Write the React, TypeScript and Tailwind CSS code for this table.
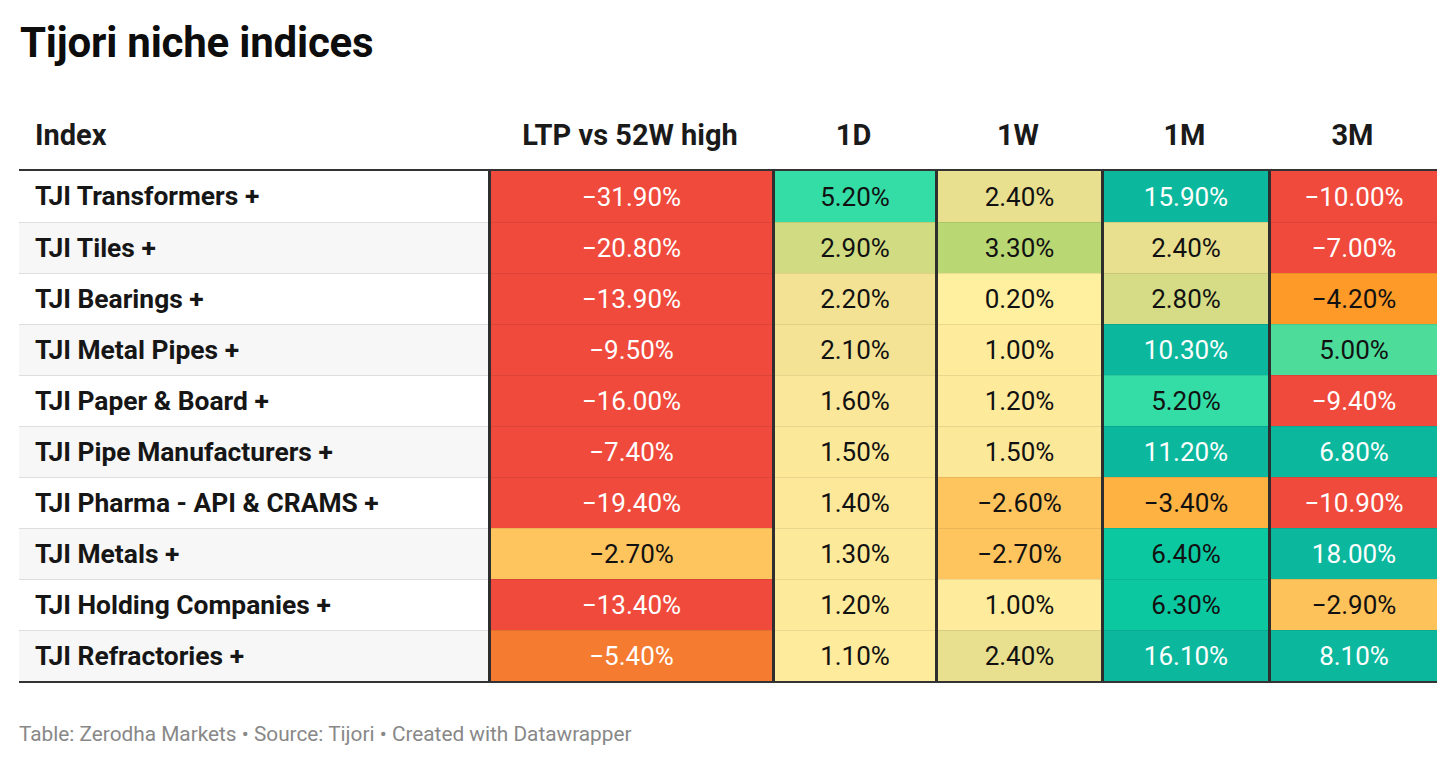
import React from "react";

type Cell = { v: string; c: string };

const R = "bg-[#ef4a3c] text-white";
const TEAL = "bg-[#0bb89e] text-white";
const TEAL2 = "bg-[#0cc8a1] text-[#111]";
const MINT = "bg-[#34dca6] text-[#111]";

const rows: { name: string; cells: Cell[] }[] = [
  {
    name: "TJI Transformers +",
    cells: [
      { v: "−31.90%", c: R },
      { v: "5.20%", c: MINT },
      { v: "2.40%", c: "bg-[#e8df8f] text-[#111]" },
      { v: "15.90%", c: TEAL },
      { v: "−10.00%", c: R },
    ],
  },
  {
    name: "TJI Tiles +",
    cells: [
      { v: "−20.80%", c: R },
      { v: "2.90%", c: "bg-[#d1dc82] text-[#111]" },
      { v: "3.30%", c: "bg-[#b9d772] text-[#111]" },
      { v: "2.40%", c: "bg-[#e8df8f] text-[#111]" },
      { v: "−7.00%", c: R },
    ],
  },
  {
    name: "TJI Bearings +",
    cells: [
      { v: "−13.90%", c: R },
      { v: "2.20%", c: "bg-[#f3e293] text-[#111]" },
      { v: "0.20%", c: "bg-[#fef09f] text-[#111]" },
      { v: "2.80%", c: "bg-[#d5dc85] text-[#111]" },
      { v: "−4.20%", c: "bg-[#fd9a28] text-[#111]" },
    ],
  },
  {
    name: "TJI Metal Pipes +",
    cells: [
      { v: "−9.50%", c: R },
      { v: "2.10%", c: "bg-[#f4e394] text-[#111]" },
      { v: "1.00%", c: "bg-[#feec9c] text-[#111]" },
      { v: "10.30%", c: TEAL },
      { v: "5.00%", c: "bg-[#4ddc9a] text-[#111]" },
    ],
  },
  {
    name: "TJI Paper & Board +",
    cells: [
      { v: "−16.00%", c: R },
      { v: "1.60%", c: "bg-[#fbe799] text-[#111]" },
      { v: "1.20%", c: "bg-[#feea9b] text-[#111]" },
      { v: "5.20%", c: MINT },
      { v: "−9.40%", c: R },
    ],
  },
  {
    name: "TJI Pipe Manufacturers +",
    cells: [
      { v: "−7.40%", c: R },
      { v: "1.50%", c: "bg-[#fce899] text-[#111]" },
      { v: "1.50%", c: "bg-[#fce899] text-[#111]" },
      { v: "11.20%", c: TEAL },
      { v: "6.80%", c: TEAL },
    ],
  },
  {
    name: "TJI Pharma - API & CRAMS +",
    cells: [
      { v: "−19.40%", c: R },
      { v: "1.40%", c: "bg-[#fde89a] text-[#111]" },
      { v: "−2.60%", c: "bg-[#fec55f] text-[#111]" },
      { v: "−3.40%", c: "bg-[#fdb242] text-[#111]" },
      { v: "−10.90%", c: R },
    ],
  },
  {
    name: "TJI Metals +",
    cells: [
      { v: "−2.70%", c: "bg-[#fec55f] text-[#111]" },
      { v: "1.30%", c: "bg-[#fde99a] text-[#111]" },
      { v: "−2.70%", c: "bg-[#fec55f] text-[#111]" },
      { v: "6.40%", c: TEAL2 },
      { v: "18.00%", c: TEAL },
    ],
  },
  {
    name: "TJI Holding Companies +",
    cells: [
      { v: "−13.40%", c: R },
      { v: "1.20%", c: "bg-[#feea9b] text-[#111]" },
      { v: "1.00%", c: "bg-[#feec9c] text-[#111]" },
      { v: "6.30%", c: TEAL2 },
      { v: "−2.90%", c: "bg-[#fec25a] text-[#111]" },
    ],
  },
  {
    name: "TJI Refractories +",
    cells: [
      { v: "−5.40%", c: "bg-[#f47b2f] text-white" },
      { v: "1.10%", c: "bg-[#feeb9c] text-[#111]" },
      { v: "2.40%", c: "bg-[#e8df8f] text-[#111]" },
      { v: "16.10%", c: TEAL },
      { v: "8.10%", c: TEAL },
    ],
  },
];

const widths = ["w-[284px]", "w-[163px]", "w-[166px]", "w-[167px]", "w-[169px]"];
const heads = ["LTP vs 52W high", "1D", "1W", "1M", "3M"];

export default function App() {
  return (
    <div className="w-[1456px] h-[766px] bg-white px-[19px] pt-[19px] [font-family:Roboto,'Liberation_Sans',sans-serif] text-[#1a1a1a]">
      <h1 className="text-[42px] leading-[48px] font-bold text-[#0d0d0d] pl-[1px] tracking-[-0.2px]">
        Tijori niche indices
      </h1>

      <div className="mt-[44px] w-[1418px]">
        <div className="flex h-[60px] items-center pb-[8px] border-b-2 border-[#333] font-bold text-[29px]">
          <div className="w-[469px] pl-[16px]">Index</div>
          {heads.map((h, i) => (
            <div key={h} className={`${widths[i]} text-center`}>
              {h}
            </div>
          ))}
        </div>

        <div className="border-b-2 border-[#333]">
          {rows.map((r, ri) => (
            <div
              key={r.name}
              className={`flex h-[51px] ${ri % 2 === 1 ? "bg-[#f7f7f7]" : "bg-white"}`}
            >
              <div
                className={`w-[469px] pl-[16px] pt-[1px] flex items-center font-bold text-[26.4px] text-[#161616] ${
                  ri > 0 ? "border-t border-[#dedede]" : ""
                }`}
              >
                {r.name}
              </div>
              {r.cells.map((c, ci) => (
                <div
                  key={ci}
                  className={`${widths[ci]} border-l-[3px] border-l-[#2e2e2e] flex items-stretch`}
                >
                  <div
                    className={`flex-1 flex items-center justify-center pt-[1px] text-[26px] ${c.c} ${
                      ri > 0 ? "border-t border-t-[rgba(0,0,0,0.08)]" : ""
                    }`}
                  >
                    {c.v}
                  </div>
                </div>
              ))}
            </div>
          ))}
        </div>
      </div>

      <div className="mt-[38px] text-[20.8px] leading-[26px] text-[#888]">
        Table: Zerodha Markets • Source: Tijori • Created with Datawrapper
      </div>
    </div>
  );
}
